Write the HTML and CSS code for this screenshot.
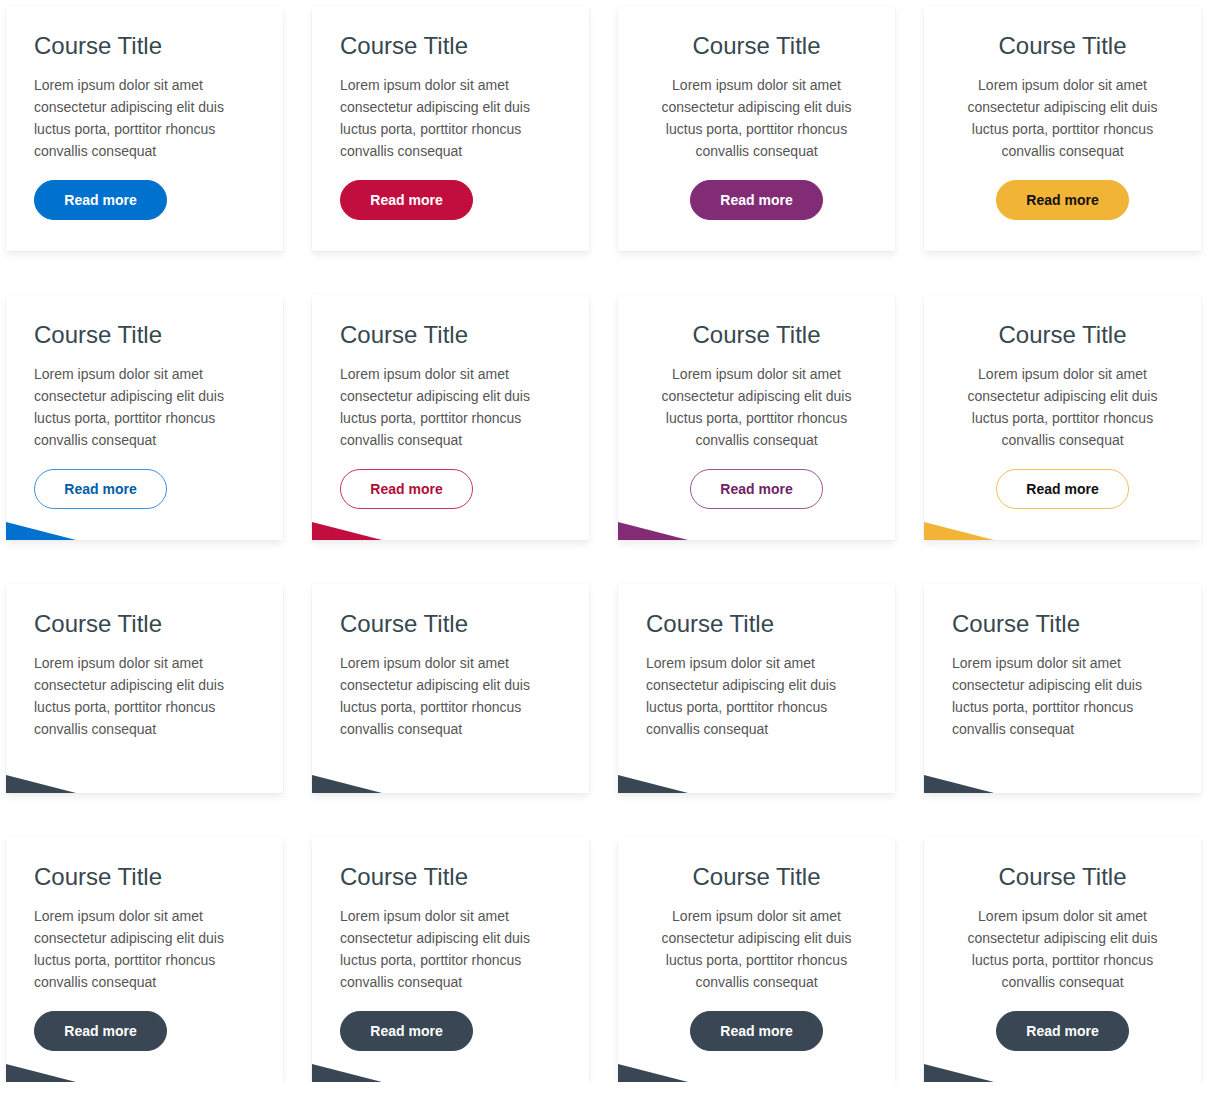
FILE: index.html
```html
<!DOCTYPE html>
<html lang="en">
<head>
<meta charset="utf-8">
<title>Course Cards</title>
<link rel="stylesheet" href="styles.css">
</head>
<body>
<div class="grid">
  <div class="card"><h2 class="card__title">Course Title</h2><p class="card__text">Lorem ipsum dolor sit amet consectetur adipiscing elit duis luctus porta, porttitor rhoncus convallis consequat</p><a class="btn btn--blue">Read more</a></div>
  <div class="card"><h2 class="card__title">Course Title</h2><p class="card__text">Lorem ipsum dolor sit amet consectetur adipiscing elit duis luctus porta, porttitor rhoncus convallis consequat</p><a class="btn btn--red">Read more</a></div>
  <div class="card card--center"><h2 class="card__title">Course Title</h2><p class="card__text">Lorem ipsum dolor sit amet consectetur adipiscing elit duis luctus porta, porttitor rhoncus convallis consequat</p><a class="btn btn--purple">Read more</a></div>
  <div class="card card--center"><h2 class="card__title">Course Title</h2><p class="card__text">Lorem ipsum dolor sit amet consectetur adipiscing elit duis luctus porta, porttitor rhoncus convallis consequat</p><a class="btn btn--yellow">Read more</a></div>

  <div class="card card--tri tri--blue"><h2 class="card__title">Course Title</h2><p class="card__text">Lorem ipsum dolor sit amet consectetur adipiscing elit duis luctus porta, porttitor rhoncus convallis consequat</p><a class="btn btn--outline-blue">Read more</a></div>
  <div class="card card--tri tri--red"><h2 class="card__title">Course Title</h2><p class="card__text">Lorem ipsum dolor sit amet consectetur adipiscing elit duis luctus porta, porttitor rhoncus convallis consequat</p><a class="btn btn--outline-red">Read more</a></div>
  <div class="card card--center card--tri tri--purple"><h2 class="card__title">Course Title</h2><p class="card__text">Lorem ipsum dolor sit amet consectetur adipiscing elit duis luctus porta, porttitor rhoncus convallis consequat</p><a class="btn btn--outline-purple">Read more</a></div>
  <div class="card card--center card--tri tri--yellow"><h2 class="card__title">Course Title</h2><p class="card__text">Lorem ipsum dolor sit amet consectetur adipiscing elit duis luctus porta, porttitor rhoncus convallis consequat</p><a class="btn btn--outline-yellow">Read more</a></div>

  <div class="card card--plain card--tri tri--dark"><h2 class="card__title">Course Title</h2><p class="card__text">Lorem ipsum dolor sit amet consectetur adipiscing elit duis luctus porta, porttitor rhoncus convallis consequat</p></div>
  <div class="card card--plain card--tri tri--dark"><h2 class="card__title">Course Title</h2><p class="card__text">Lorem ipsum dolor sit amet consectetur adipiscing elit duis luctus porta, porttitor rhoncus convallis consequat</p></div>
  <div class="card card--plain card--tri tri--dark"><h2 class="card__title">Course Title</h2><p class="card__text">Lorem ipsum dolor sit amet consectetur adipiscing elit duis luctus porta, porttitor rhoncus convallis consequat</p></div>
  <div class="card card--plain card--tri tri--dark"><h2 class="card__title">Course Title</h2><p class="card__text">Lorem ipsum dolor sit amet consectetur adipiscing elit duis luctus porta, porttitor rhoncus convallis consequat</p></div>

  <div class="card card--tri tri--dark"><h2 class="card__title">Course Title</h2><p class="card__text">Lorem ipsum dolor sit amet consectetur adipiscing elit duis luctus porta, porttitor rhoncus convallis consequat</p><a class="btn btn--dark">Read more</a></div>
  <div class="card card--tri tri--dark"><h2 class="card__title">Course Title</h2><p class="card__text">Lorem ipsum dolor sit amet consectetur adipiscing elit duis luctus porta, porttitor rhoncus convallis consequat</p><a class="btn btn--dark">Read more</a></div>
  <div class="card card--center card--tri tri--dark"><h2 class="card__title">Course Title</h2><p class="card__text">Lorem ipsum dolor sit amet consectetur adipiscing elit duis luctus porta, porttitor rhoncus convallis consequat</p><a class="btn btn--dark">Read more</a></div>
  <div class="card card--center card--tri tri--dark"><h2 class="card__title">Course Title</h2><p class="card__text">Lorem ipsum dolor sit amet consectetur adipiscing elit duis luctus porta, porttitor rhoncus convallis consequat</p><a class="btn btn--dark">Read more</a></div>
</div>
</body>
</html>
```
FILE: styles.css
```css
* { box-sizing: border-box; }

body {
  margin: 0;
  background: #ffffff;
  font-family: "Liberation Sans", Arial, sans-serif;
}

.grid {
  display: grid;
  grid-template-columns: repeat(4, 277px);
  column-gap: 29px;
  row-gap: 44px;
  padding: 6px 0 0 6px;
  align-items: start;
}

.card {
  position: relative;
  display: flex;
  flex-direction: column;
  align-items: flex-start;
  background: #ffffff;
  padding: 25px 28px 31px;
  box-shadow: 0 4px 7px rgba(0, 0, 0, 0.07), 0 0 2px rgba(0, 0, 0, 0.05);
}

.card--center {
  align-items: center;
  text-align: center;
}

.card--plain {
  padding-bottom: 35px;
}

.card__title {
  margin: 0 0 14px;
  font-size: 24px;
  line-height: 29px;
  font-weight: 400;
  color: #37474f;
}

.card__text {
  margin: 0 0 18px;
  font-size: 14px;
  line-height: 22px;
  color: #555555;
}

.btn {
  display: flex;
  align-items: center;
  justify-content: center;
  width: 133px;
  height: 40px;
  border-radius: 20px;
  font-size: 14px;
  font-weight: 700;
  color: #ffffff;
  border: 1px solid transparent;
  cursor: pointer;
}

.btn--blue { background: #0071ce; border-color: #0071ce; }
.btn--red { background: #c20e3e; border-color: #c20e3e; }
.btn--purple { background: #822c75; border-color: #822c75; }
.btn--yellow { background: #f2b437; border-color: #f2b437; color: #111111; }
.btn--dark { background: #394754; border-color: #394754; }

.btn--outline-blue { background: #fff; border-color: #3c8ede; color: #005da8; }
.btn--outline-red { background: #fff; border-color: #c8345a; color: #b00d38; }
.btn--outline-purple { background: #fff; border-color: #9b5690; color: #6f2464; }
.btn--outline-yellow { background: #fff; border-color: #f2c05c; color: #111111; }

.card--tri::after {
  content: "";
  position: absolute;
  left: 0;
  bottom: 0;
  width: 70px;
  height: 18px;
  clip-path: polygon(0 0, 0 100%, 100% 100%);
  background: var(--tri);
}

.tri--blue { --tri: #0071ce; }
.tri--red { --tri: #c20e3e; }
.tri--purple { --tri: #822c75; }
.tri--yellow { --tri: #f2b437; }
.tri--dark { --tri: #394754; }
```
